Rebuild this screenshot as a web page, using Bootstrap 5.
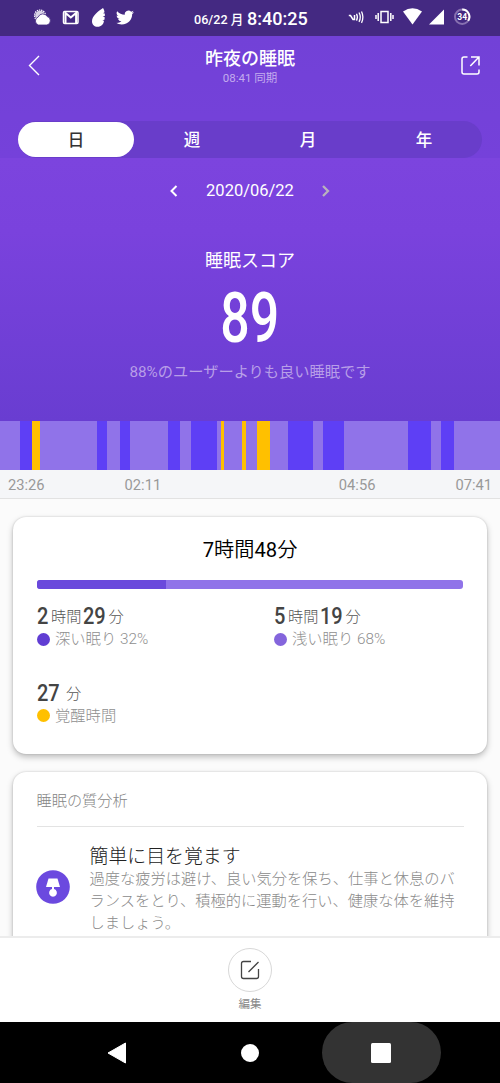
<!DOCTYPE html>
<html lang="ja">
<head>
<meta charset="utf-8">
<meta name="viewport" content="width=device-width, initial-scale=1">
<title>昨夜の睡眠</title>
<link rel="stylesheet" href="https://cdn.jsdelivr.net/npm/bootstrap@5.3.0/dist/css/bootstrap.min.css">
<style>
body{font-family:Roboto,"Noto Sans CJK JP",sans-serif;background:#fbfbfb;color:#444;height:1083px;overflow:hidden}
svg{display:block;flex:none}
.statusbar{height:36px;background:#442982;padding:0 28px 0 33px}
.status-left{width:161px;padding-bottom:2px}
.status-date{font-size:12.6px;line-height:20px;padding-top:4px;font-weight:500;width:49px;white-space:nowrap}
.status-time{font-size:18px;line-height:20px;font-weight:500;padding-top:2px}
.apphead{height:122px;background:linear-gradient(#7241d7,#7541da);padding:0 18px}
.titlebar{height:58px;padding:0 1px 0 9px}
.titles{padding-top:3px;width:120px}
.app-title{font-size:18px;line-height:24px;font-weight:500}
.app-sub{font-size:11.5px;line-height:15px;color:#c4acee}
.edge{width:60px}
.period{height:37px;margin-top:27px;background:#693dca;border-radius:18.5px;padding-top:1px}
.period .nav-link{height:35px;line-height:38px;padding:0;color:#fff;font-size:16.5px;font-weight:500;border-radius:18px}
.period .nav-link.active{background:#fff;color:#333}
.hero{height:263px;background:linear-gradient(#7c44de 0%,#7a42dd 28%,#693dd1 100%)}
.dateline{height:28px;margin-top:19px;font-size:16.5px;gap:27px}
.dateline span{padding-top:1px}
.score-label{font-size:18px;line-height:26px;margin-top:43px}
.score{font-size:70px;line-height:60px;margin-top:14px;height:60px;font-weight:500}
.score span{display:inline-block;transform:scaleX(.74)}
.score-note{font-size:15.25px;line-height:22px;margin-top:12.5px;color:#b89ee8}
.timeline{height:49px;border-radius:0;background:#9073e9}
.seg-light{background:#9073e9}.seg-deep{background:#5e3ff5}.seg-wake{background:#ffc000}
.axis{height:29px;background:#f5f6f8;border-bottom:1px solid #e2e2e2;color:#999;font-size:14.7px;line-height:30px;padding:0 8px}
.axis-pair{gap:80px}
.panel{margin:0 13px;background:#fff;border:0;border-radius:13px;padding:0 24px;box-shadow:0 3px 6px rgba(0,0,0,.25),0 0 2px rgba(0,0,0,.18)}
.panel-sum{margin-top:18px;height:237px}
.total{font-size:20.2px;line-height:28px;margin-top:19px;color:#000;font-weight:350}
.ratio{height:9px;border-radius:3px;margin-top:16px;background:#9073e9}
.ratio .progress-bar{background:#6a49dc}
.stat{height:76.5px;padding-top:14px}
.stat-half{flex:0 0 237px}
.stat-val{height:26px;line-height:27px;font-size:15.2px;color:#555;font-weight:300;white-space:nowrap}
.stat-val>span:not(.num){padding-top:1px}
.num{display:inline-block;font-size:23px;font-weight:500;color:#444;transform:scaleX(.87);transform-origin:left}
.num1{width:14px}.num2{width:25px;margin-left:2px}
.stat-key{font-size:15.3px;line-height:20px;color:#8f8f8f;font-weight:300;gap:5px}
.dot{width:13px;height:13px;border-radius:50%}
.dot-deep{background:#603dd3}.dot-light{background:#8465dc}.dot-wake{background:#ffc000}
.panel-an{margin-top:18px;height:300px;padding:0 23.5px}
.an-head{font-size:15.2px;line-height:22px;padding:18px 0 14px;border-bottom:1px solid #e3e3e3;color:#858585;font-weight:300;height:55px}
.tip-icon{margin:24px 20px 0 -1px}
.tip-title{font-size:18.9px;line-height:25px;font-weight:300;color:#222;padding-top:1px}
.tip-text{font-size:15.25px;line-height:22px;margin-top:-1px;color:#8a8a8a;font-weight:300;white-space:nowrap}
.scrollzone{height:437px;overflow:hidden}
.editbar{height:86px;background:#fff;border-top:2px solid #ececec;padding-top:9.5px}
.edit-btn{width:44px;height:44px;border:1px solid #d8d8d8;border-radius:50%;background:#fff}
.edit-txt{font-size:11.5px;line-height:16px;color:#888;margin-top:4.5px}
.sysnav{height:61px;background:#000}
.sysnav .slot{width:131px}
.recent{width:119px;height:61px;border-radius:31px;background:#333}
</style>
</head>
<body>
<header class="statusbar d-flex align-items-center text-white">
  <div class="status-left d-flex align-items-center">
    <svg width="19" height="18" viewBox="0 0 19 18"><circle cx="7" cy="7.500" r="4.800" fill="#fff" fill-opacity=".8"/><circle cx="7" cy="7.500" r="5.500" fill="none" stroke="#fff" stroke-width="1.200" stroke-dasharray="1.400 .8"/><path d="M5.500 17a4.200 4.200 0 0 1-.3-8 5 5 0 0 1 9-.5A4.400 4.400 0 0 1 14 17z" fill="#fff" stroke="#442982" stroke-width=".8"/></svg>
    <svg class="ms-2" width="22" height="18" viewBox="0 0 22 18"><rect x="3.500" y="3.500" width="14.500" height="12" rx="1.200" fill="none" stroke="#fff" stroke-width="1.500"/><path d="M5.500 15V5l5.300 4.500L16.100 5v10" fill="none" stroke="#fff" stroke-width="2"/></svg>
    <svg class="ms-2" width="18" height="22" viewBox="0 0 18 22"><path d="M13 2C8.500 5 2 10 2 15.200c0 3.300 2.400 5.600 5.600 5.600 3.600 0 6-2.500 6.400-6l-1.600-.3 2.200-1V11l-2-.3 2.300-1-.1-2.200-1.800-.3 1.500-.9C14.300 4.600 13.900 3.200 13 2z" fill="#fff"/></svg>
    <svg class="ms-2" width="18" height="17" viewBox="0 0 24 24" preserveAspectRatio="none"><path fill="#fff" d="M23.950 4.570a10 10 0 0 1-2.820.77 4.960 4.960 0 0 0 2.160-2.720 9.900 9.900 0 0 1-3.120 1.190 4.920 4.920 0 0 0-8.380 4.480C7.690 8.090 4.070 6.130 1.640 3.160a4.920 4.920 0 0 0 1.520 6.570 4.900 4.900 0 0 1-2.230-.61v.06a4.920 4.920 0 0 0 3.950 4.830 5 5 0 0 1-2.210.08 4.940 4.940 0 0 0 4.600 3.420A9.870 9.870 0 0 1 0 19.540a13.990 13.990 0 0 0 7.550 2.210c9.050 0 14-7.500 14-13.990v-.63a9.900 9.900 0 0 0 2.400-2.560z"/></svg>
  </div>
  <div class="d-flex align-items-center gap-1"><span class="status-date">06/22 月</span><span class="status-time">8:40:25</span></div>
  <div class="d-flex align-items-center ms-auto">
    <svg width="124" height="20" viewBox="0 0 124 20" fill="none" stroke="#fff">
      <path d="M.8 7.500h1.700l2.500 4h1.500V7" stroke-width="1.500"/><path d="M8.500 5.800q1.800 3.400 0 6.800M11 4.500q2.600 4.700 0 9.400M13.500 3.500q2.800 5.700 0 11.400" stroke-width="1.300"/>
      <path d="M33 3.500h7v11h-7zM30.200 5v8M42.800 5v8M28 7v4M45 7v4" stroke-width="1.500"/>
      <path d="M55 3.500q9.500-6.500 19 0L64.500 16.500z" fill="#fff" stroke="none"/>
      <path d="M96 1.500v15H81z" fill="#fff" stroke="none"/>
      <circle cx="114.200" cy="8.800" r="7.200" stroke="#8770b0" stroke-width="2"/><path d="M114.200 1.600a7.200 7.200 0 0 1 6 11.200" stroke-width="2"/>
      <text x="114.200" y="12" fill="#fff" stroke="none" font-size="8.500" font-weight="700" text-anchor="middle">34</text>
    </svg>
  </div>
</header>

<section class="apphead text-white">
  <div class="titlebar d-flex justify-content-between align-items-center">
    <div class="edge"><svg width="20" height="24" viewBox="0 0 20 24"><path d="M12 3 2.500 12.500 12 22" fill="none" stroke="#fff" stroke-width="1.400"/></svg></div>
    <div class="titles text-center me-2"><h1 class="app-title m-0">昨夜の睡眠</h1><div class="app-sub">08:41 同期</div></div>
    <div class="edge d-flex justify-content-end"><svg width="20" height="22" viewBox="0 0 20 22"><path d="M6.500 3H3Q1 3 1 5v13q0 2 2 2h13q2 0 2-2v-2.500M10 3h8v8.500M18 3l-8.700 9" fill="none" stroke="#fff" stroke-width="1.500"/></svg></div>
  </div>
  <ul class="period nav nav-pills nav-fill flex-nowrap">
    <li class="nav-item w-25"><a class="nav-link active" href="#">日</a></li>
    <li class="nav-item w-25"><a class="nav-link" href="#">週</a></li>
    <li class="nav-item w-25"><a class="nav-link" href="#">月</a></li>
    <li class="nav-item w-25"><a class="nav-link" href="#">年</a></li>
  </ul>
</section>

<section class="hero text-white text-center d-flex flex-column">
  <div class="dateline d-flex justify-content-center align-items-center">
    <svg width="10" height="14" viewBox="0 0 10 14"><path d="M7.500 2 2.500 7l5 5" fill="none" stroke="#fff" stroke-width="2"/></svg>
    <span>2020/06/22</span>
    <svg width="10" height="14" viewBox="0 0 10 14"><path d="m2 2 5 5-5 5" fill="none" stroke="#b9b2bd" stroke-width="2.300"/></svg>
  </div>
  <div class="score-label">睡眠スコア</div>
  <div class="score"><span>89</span></div>
  <div class="score-note">88%のユーザーよりも良い睡眠です</div>
</section>

<div class="timeline progress" id="timeline"></div>
<div class="axis d-flex justify-content-between"><div class="axis-pair d-flex"><span>23:26</span><span>02:11</span></div><div class="axis-pair d-flex"><span>04:56</span><span>07:41</span></div></div>

<main class="scrollzone">
  <section class="panel panel-sum card">
    <h2 class="total text-center mb-0"><span class="fw-normal">7</span>時間<span class="fw-normal">48</span>分</h2>
    <div class="ratio progress"><div class="progress-bar" style="width:30.3%"></div></div>
    <div class="row g-0">
      <div class="col stat stat-half">
        <div class="stat-val d-flex"><span class="num num1">2</span><span>時間</span><span class="num num2">29</span><span>分</span></div>
        <div class="stat-key d-flex align-items-center"><i class="dot dot-deep"></i>深い眠り 32%</div>
      </div>
      <div class="col stat">
        <div class="stat-val d-flex"><span class="num num1">5</span><span>時間</span><span class="num num2">19</span><span>分</span></div>
        <div class="stat-key d-flex align-items-center"><i class="dot dot-light"></i>浅い眠り 68%</div>
      </div>
    </div>
    <div class="stat">
      <div class="stat-val d-flex"><span class="num num2 ms-0">27</span><span class="ms-1">分</span></div>
      <div class="stat-key d-flex align-items-center"><i class="dot dot-wake"></i>覚醒時間</div>
    </div>
  </section>

  <section class="panel panel-an card">
    <div class="an-head">睡眠の質分析</div>
    <div class="d-flex pt-3">
      <svg class="tip-icon" width="34" height="38" viewBox="0 0 34 38"><circle cx="17" cy="20" r="16.800" fill="#6b49df"/><path d="M12.500 11.500h9l2.500 8.500H10z" fill="#fff"/><path d="M16 19.500h2v2.500a3.900 3.900 0 1 1-2 0z" fill="#fff"/></svg>
      <div>
        <h3 class="tip-title m-0">簡単に目を覚ます</h3>
        <p class="tip-text mb-0">過度な疲労は避け、良い気分を保ち、仕事と休息のバ<br>ランスをとり、積極的に運動を行い、健康な体を維持<br>しましょう。</p>
      </div>
    </div>
  </section>
</main>

<footer>
  <div class="editbar d-flex flex-column align-items-center">
    <button class="edit-btn p-0 d-flex align-items-center justify-content-center" type="button" aria-label="編集"><svg width="20" height="20" viewBox="0 0 20 20"><path d="M11 1.500H3.500Q1.500 1.500 1.500 3.500v13q0 2 2 2h13q2 0 2-2V9M18.500 2 8.500 12" fill="none" stroke="#444" stroke-width="1.300"/></svg></button>
    <div class="edit-txt">編集</div>
  </div>
  <nav class="sysnav d-flex justify-content-center align-items-center">
    <div class="slot d-flex justify-content-center pe-1"><svg width="20" height="22" viewBox="0 0 20 22"><path d="M18.500 1v20L1 11z" fill="#fff" stroke="#fff" stroke-linejoin="round"/></svg></div>
    <div class="slot d-flex justify-content-center"><svg width="20" height="20"><circle cx="10" cy="10" r="9" fill="#fff"/></svg></div>
    <div class="slot d-flex justify-content-center"><div class="recent d-flex align-items-center justify-content-center"><svg width="20" height="20"><rect width="20" height="20" rx="1.500" fill="#fff"/></svg></div></div>
  </nav>
</footer>
<script src="https://cdn.jsdelivr.net/npm/bootstrap@5.3.0/dist/js/bootstrap.bundle.min.js"></script>
<script>
// Sleep phases: [phase, start, end], on a night 500 units long
const phases=[['deep',20,32],['wake',32,40],['deep',97,107],['deep',120,130],['deep',168,180],['deep',191,216.5],['wake',221.3,224.5],['wake',242.5,245.6],['wake',257,270],['deep',288,313.5],['deep',323.5,344],['deep',408.5,431],['deep',441,454]];
let at=0,html='';
const seg=(k,w)=>`<div class="seg-${k} flex-shrink-0" style="width:${w/5}%"></div>`;
for(const [k,a,b] of phases){if(a>at)html+=seg('light',a-at);html+=seg(k,b-a);at=b}
document.getElementById('timeline').innerHTML=html+seg('light',500-at);
</script>
</body>
</html>
